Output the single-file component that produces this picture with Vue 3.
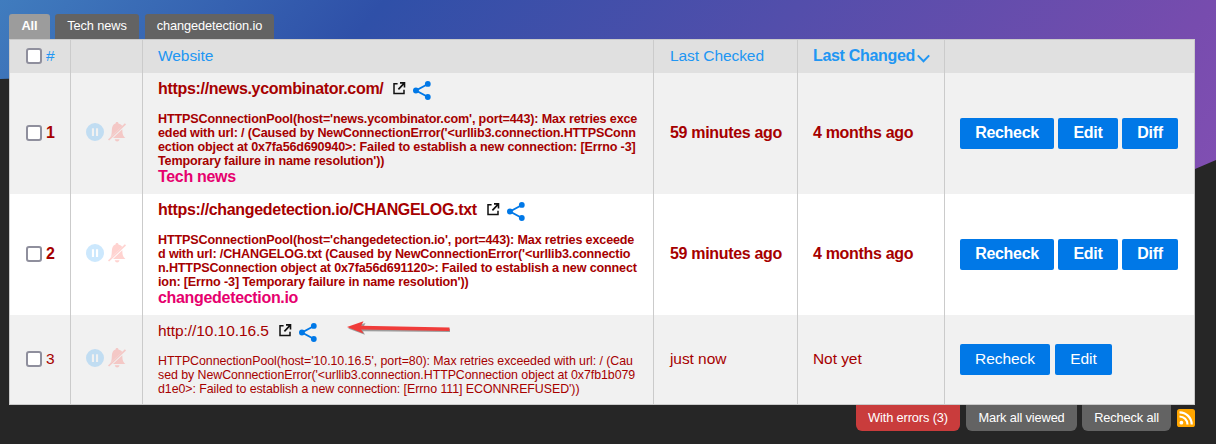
<script setup>
const tabs = ['All', 'Tech news', 'changedetection.io']
const rows = [
  {
    id: 1, bold: true, url: 'https://news.ycombinator.com/', tag: 'Tech news',
    error: [
      "HTTPSConnectionPool(host='news.ycombinator.com', port=443): Max retries exce",
      "eded with url: / (Caused by NewConnectionError('<urllib3.connection.HTTPSConn",
      'ection object at 0x7fa56d690940>: Failed to establish a new connection: [Errno -3]',
      "Temporary failure in name resolution'))",
    ],
    checked: '59 minutes ago', changed: '4 months ago', actions: ['Recheck', 'Edit', 'Diff'],
  },
  {
    id: 2, bold: true, url: 'https://changedetection.io/CHANGELOG.txt', tag: 'changedetection.io',
    error: [
      "HTTPSConnectionPool(host='changedetection.io', port=443): Max retries exceede",
      "d with url: /CHANGELOG.txt (Caused by NewConnectionError('<urllib3.connectio",
      'n.HTTPSConnection object at 0x7fa56d691120>: Failed to establish a new connect',
      "ion: [Errno -3] Temporary failure in name resolution'))",
    ],
    checked: '59 minutes ago', changed: '4 months ago', actions: ['Recheck', 'Edit', 'Diff'],
  },
  {
    id: 3, bold: false, url: 'http://10.10.16.5', tag: '',
    error: [
      "HTTPConnectionPool(host='10.10.16.5', port=80): Max retries exceeded with url: / (Cau",
      "sed by NewConnectionError('<urllib3.connection.HTTPConnection object at 0x7fb1b079",
      "d1e0>: Failed to establish a new connection: [Errno 111] ECONNREFUSED'))",
    ],
    checked: 'just now', changed: 'Not yet', actions: ['Recheck', 'Edit'],
  },
]
</script>

<template>
  <div class="page">
    <div class="backdrop"></div>
    <main class="content">
      <nav class="tabs">
        <a v-for="(t, i) in tabs" :key="t" class="tab" :class="{ active: i === 0 }">{{ t }}</a>
      </nav>
      <table class="watches">
        <colgroup>
          <col class="c-num"><col class="c-ctl"><col class="c-site"><col class="c-checked"><col class="c-changed"><col class="c-act">
        </colgroup>
        <thead>
          <tr>
            <th><span class="pick"><i class="box"></i><span>#</span></span></th>
            <th></th>
            <th>Website</th>
            <th class="time">Last Checked</th>
            <th class="sorted">Last Changed<svg class="chev" width="13" height="9" viewBox="0 0 13 9"><path d="M.8 1.400 6.500 7.200 12.200 1.400" fill="none" stroke="#2196f3" stroke-width="2" /></svg></th>
            <th></th>
          </tr>
        </thead>
        <tbody>
          <tr v-for="r in rows" :key="r.id" :class="{ bold: r.bold, short: !r.bold }">
            <td><span class="pick"><i class="box"></i><span>{{ r.id }}</span></span></td>
            <td>
              <span class="controls">
                <svg width="18" height="18" viewBox="0 0 18 18"><path fill-rule="evenodd" fill="#1b98f8" d="M9 0a9 9 0 1 0 0 18A9 9 0 0 0 9 0ZM5.900 5.200h2.100v7.900H5.900ZM10 5.200h2.100v7.900H10Z" /></svg>
                <svg width="18" height="20" viewBox="0 0 18 20">
                  <g fill="#ff3a30">
                    <path d="M9 0c1 0 1.500.7 1.400 1.600 1.900.5 3.200 1.400 3.900 2.500L2.200 15c1.200-1.600 1.500-3.400 1.600-6.300C3.900 4.500 5.100 2.300 7.600 1.600 7.500.7 8 0 9 0Z" />
                    <path d="M14.300 7.200c.1 4.600.5 6.300 3.100 8.900H5Z" />
                    <path d="M6.800 17.300h4.700c-.4 1.400-1.300 2.200-2.350 2.200s-1.950-.8-2.350-2.200Z" />
                    <path d="M0 17.400 16.900 1.300l1.100 1.200L1.100 18.600Z" />
                  </g>
                </svg>
              </span>
            </td>
            <td class="site">
              <div class="url">
                <span>{{ r.url }}</span>
                <svg class="ext" width="13" height="13" viewBox="0 0 13 13"><path d="M4.600 1.800H1v9.800h10V7.800" fill="none" stroke="#111" stroke-width="1.500" /><path d="M7 .1h5.300v5.300h-1.600V3.100L6 7.900 4.800 6.700 9.500 1.800H7Z" fill="#111" /></svg>
                <svg class="share" width="18" height="19" viewBox="0 0 18 19"><path d="M15 3 3 9.500 15 16" fill="none" stroke="#0078e7" stroke-width="1.900" /><g fill="#0078e7"><circle cx="14.800" cy="2.900" r="2.900" /><circle cx="2.900" cy="9.500" r="2.900" /><circle cx="14.800" cy="16" r="2.900" /></g></svg>
                <svg v-if="r.id === 3" class="arrow" width="108" height="20" viewBox="0 0 108 20">
                  <path d="M2 9.500 19.500 4 17 9 104 9.800v3.200L17 12.200 19 15.800Z" fill="#666" opacity=".6" />
                  <path d="M1 8 17.500 2.200 15.200 6.800 103.500 8.600v3.400L15.200 10.600 17.500 14.400Z" fill="#f03c3a" />
                </svg>
              </div>
              <div class="error"><div v-for="l in r.error" :key="l">{{ l }}</div></div>
              <div v-if="r.tag" class="tag">{{ r.tag }}</div>
            </td>
            <td class="time"><span class="when">{{ r.checked }}</span></td>
            <td><span class="when">{{ r.changed }}</span></td>
            <td><span class="actions"><a v-for="a in r.actions" :key="a" class="btn" :class="a.toLowerCase()">{{ a }}</a></span></td>
          </tr>
        </tbody>
      </table>
      <footer class="below">
        <a class="low err">With errors (3)</a>
        <a class="low mark">Mark all viewed</a>
        <a class="low again">Recheck all</a>
        <svg class="rss" width="18" height="18" viewBox="0 0 18 18">
          <rect width="18" height="18" rx="2.600" fill="#ffa500" />
          <circle cx="4.400" cy="13.700" r="1.900" fill="#fff" />
          <path d="M2.500 7.500a8 8 0 0 1 8 8M2.500 3.300a12.200 12.200 0 0 1 12.200 12.200" fill="none" stroke="#fff" stroke-width="2.200" />
        </svg>
      </footer>
    </main>
  </div>
</template>

<style>
body { margin: 0; background: #262626; }
</style>

<style scoped>
.page {
  position: relative;
  width: 1216px;
  height: 444px;
  overflow: hidden;
  background: #262626;
  font-family: "Liberation Sans", Arial, sans-serif;
  font-size: 15.5px;
  letter-spacing: -.07px;
}
.backdrop {
  position: absolute;
  inset: 0;
  background: linear-gradient(130deg, #407cbe 0, #2f50a8 295px, #774cae 932px, #8450b4 1080px);
  clip-path: polygon(0 0, 100% 0, 100% 160px, 1195px 169px, 800px 250px, 60px 77px, 0 79px);
}
.content { position: relative; padding: 14px 0 0 9px; width: 1186px; }
.tabs { display: flex; height: 25px; }
.tab {
  box-sizing: border-box;
  height: 25px;
  line-height: 24px;
  font-size: 12.8px;
  letter-spacing: -.1px;
  color: #fff;
  background: #636363;
  border-radius: 3px 3px 0 0;
  text-align: center;
  width: 84px;
  margin-right: 6px;
}
.tab.active { background: #9c9c9c; font-weight: bold; width: 41px; margin-right: 5px; }
.tab:last-child { width: 129px; }
.watches {
  table-layout: fixed;
  width: 1186px;
  border-collapse: separate;
  border-spacing: 0;
  border: 1px solid #cbcbcb;
  background: #fff;
}
.c-num { width: 60px; }
.c-ctl { width: 72px; }
.c-site { width: 511px; }
.c-checked { width: 144px; }
.c-changed { width: 147px; }
.c-act { width: 250px; }
th, td {
  padding: 0 0 0 15px;
  border-left: 1px solid #cbcbcb;
  text-align: left;
  vertical-align: middle;
  white-space: nowrap;
}
th:first-child, td:first-child { border-left: 0; padding-left: 16px; }
th.time, td.time { padding-left: 16px; }
th { height: 31px; padding-bottom: 2px; background: #e0e0e0; color: #2196f3; font-weight: normal; }
th.sorted, .bold td { font-weight: bold; font-size: 16px; letter-spacing: -.32px; }
.chev { margin-left: 2px; vertical-align: -2px; }
td { height: 121px; color: #a60000; }
.short td { height: 89px; }
tbody tr:nth-child(odd) td { background: #f1f1f1; }
.pick { display: flex; align-items: center; gap: 4px; height: 18px; line-height: 18px; }
td .pick { margin-bottom: 2px; }
.when { display: block; margin-bottom: 2px; }
.box {
  box-sizing: border-box;
  width: 16px;
  height: 16px;
  border: 2px solid #8f8f9d;
  border-radius: 3px;
  background: #fff;
  margin-top: 1px;
}
.controls { display: flex; gap: 4px; opacity: .22; align-items: center; margin-bottom: 3px; }
td.site { vertical-align: top; }
.url { display: flex; height: 32px; line-height: 32px; position: relative; }
.ext { margin: 9px 0 0 10px; }
.share { margin: 8px 0 0 7px; }
.arrow { position: absolute; left: 188px; top: 4px; }
.error { margin-top: 7px; font-size: 12.6px; letter-spacing: -.155px; line-height: 14px; }
.short .error { font-size: 12.4px; letter-spacing: -.06px; }
.tag { color: #e6006e; line-height: 17px; }
.actions { display: flex; gap: 4px; }
.btn {
  height: 31px;
  line-height: 30px;
  border-radius: 2px;
  background: #0078e7;
  color: #fff;
  text-align: center;
}
.recheck { width: 94px; }
.edit { width: 60px; }
.diff { width: 56px; }
.short .actions { gap: 5px; }
.short .recheck { width: 90px; }
.short .edit { width: 57px; }
.below { display: flex; justify-content: flex-end; }
.low {
  height: 26px;
  line-height: 26px;
  margin-right: 6px;
  border-radius: 0 0 6px 6px;
  background: #636363;
  color: #fff;
  font-size: 12.8px;
  letter-spacing: -.13px;
  text-align: center;
}
.low.err { width: 104px; background: #c93c3c; }
.low.mark { width: 111px; margin-right: 5px; }
.low.again { width: 89px; }
.rss { margin-top: 4px; }
</style>
